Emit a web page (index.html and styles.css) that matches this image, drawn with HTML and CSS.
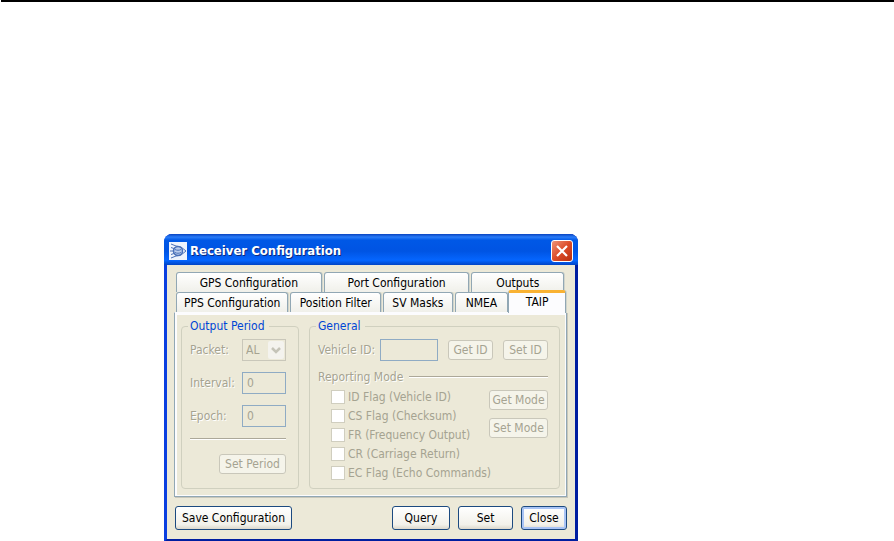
FILE: index.html
```html
<!doctype html>
<html lang="en">
<head>
  <meta charset="utf-8">
  <title>Receiver Configuration</title>
  <link rel="stylesheet" href="styles.css">
</head>
<body>
  <hr class="page-rule">
  <main class="page">
    <section class="window" aria-labelledby="title">
      <header class="titlebar">
        <svg class="app-icon" viewBox="0 0 18 18" aria-hidden="true">
          <rect width="18" height="18" fill="#eef3fd"/>
          <g fill="none" stroke="#4a70b8">
            <circle cx="9" cy="9" r="4.500" fill="#b9cbec" stroke-width="1.500"/>
            <path d="M6 7.500c2 1 4 1 6 0M6 10.500c2 1 4 1 6 0" stroke-width="1"/>
            <path d="M2 2l5 2 5 1 5 4-5 4-5 1-5 2M2 5.500l3 1M2 12.500l3-1M1 9h3" stroke-width="1"/>
          </g>
        </svg>
        <h1 id="title">Receiver Configuration</h1>
        <button class="close" type="button" aria-label="Close window">
          <svg viewBox="0 0 12 12" aria-hidden="true"><path d="M1 1l10 10M11 1L1 11" stroke="#fff" stroke-width="2.200"/></svg>
        </button>
      </header>

      <div class="client">
        <div role="tablist">
          <div class="tabs tabs-back">
            <button type="button" role="tab">GPS Configuration</button>
            <button type="button" role="tab">Port Configuration</button>
            <button type="button" role="tab">Outputs</button>
          </div>
          <div class="tabs tabs-front">
            <button type="button" role="tab">PPS Configuration</button>
            <button type="button" role="tab">Position Filter</button>
            <button type="button" role="tab">SV Masks</button>
            <button type="button" role="tab">NMEA</button>
            <button type="button" role="tab" class="active" aria-selected="true">TAIP</button>
          </div>
        </div>

        <div class="panel" role="tabpanel">
          <fieldset class="period" disabled>
            <legend>Output Period</legend>
            <div class="fields">
              <label for="packet">Packet:</label>
              <span class="select">
                <select id="packet"><option>AL</option></select>
                <svg viewBox="0 0 16 18" aria-hidden="true"><rect width="16" height="18" rx="2" fill="#f4f3ee"/><path d="M4 7l4 4 4-4" fill="none" stroke="#c5c4b8" stroke-width="2.500"/></svg>
              </span>
              <label for="interval">Interval:</label>
              <input id="interval" type="text" value="0">
              <label for="epoch">Epoch:</label>
              <input id="epoch" type="text" value="0">
            </div>
            <hr class="line">
            <button type="button" class="set-period">Set Period</button>
          </fieldset>

          <fieldset class="general" disabled>
            <legend>General</legend>
            <div class="vehicle">
              <label for="vehicle">Vehicle ID:</label>
              <input id="vehicle" type="text">
              <button type="button">Get ID</button>
              <button type="button">Set ID</button>
            </div>
            <div class="heading"><span>Reporting Mode</span><hr></div>
            <div class="mode">
              <div class="flags">
                <label><input type="checkbox">ID Flag (Vehicle ID)</label>
                <label><input type="checkbox">CS Flag (Checksum)</label>
                <label><input type="checkbox">FR (Frequency Output)</label>
                <label><input type="checkbox">CR (Carriage Return)</label>
                <label><input type="checkbox">EC Flag (Echo Commands)</label>
              </div>
              <div class="mode-buttons">
                <button type="button">Get Mode</button>
                <button type="button">Set Mode</button>
              </div>
            </div>
          </fieldset>
        </div>

        <footer class="actions">
          <button type="button" class="save">Save Configuration</button>
          <button type="button" class="query">Query</button>
          <button type="button" class="set">Set</button>
          <button type="button" class="default">Close</button>
        </footer>
      </div>
    </section>
  </main>
</body>
</html>
```

FILE: styles.css
```css
* {
  box-sizing: border-box;
}

body {
  margin: 0;
  background: #fff;
  color: #000;
  font: 12px/14px "DejaVu Sans Condensed", "DejaVu Sans", sans-serif;
}

button,
input,
select {
  margin: 0;
  padding: 0;
  font: inherit;
  color: inherit;
  white-space: nowrap;
}

hr {
  height: 2px;
  margin: 0;
  border: 0;
  border-top: 1px solid #aca899;
  background: #fff;
}

.page-rule {
  margin-left: 1px;
  border-top-color: #000;
  background: #000;
}

.page {
  display: flex;
  padding: 232px 0 0 164px;
}

.window {
  flex: 0 1 414px;
  border: solid #0a3fe0;
  border-width: 0 3px 3px;
  border-right-color: #001ea0;
  border-bottom-color: #001ea0;
  border-radius: 8px 8px 0 0;
  background: #0a3fe0;
}

.titlebar {
  display: flex;
  align-items: center;
  height: 31px;
  margin: 0 -3px;
  padding: 2px 5px 0;
  border-radius: 8px 8px 0 0;
  background: linear-gradient(#0843c0, #2a7cf8 10%, #0058e6 20%, #0054e3 55%, #0566ff 85%, #0245c4);
}

.app-icon {
  width: 18px;
  height: 18px;
}

h1 {
  flex: 1;
  margin: 0 0 0 3px;
  color: #fff;
  font-size: 13px;
  line-height: 18px;
  text-shadow: 1px 1px #0a2a80;
}

.close {
  display: grid;
  place-items: center;
  width: 22px;
  height: 22px;
  border: 1px solid #fff;
  border-radius: 3px;
  background: linear-gradient(135deg, #ee9478, #dc4c28 50%, #b83010);
}

.close svg {
  width: 12px;
}

.client {
  padding: 7px 8px 9px 7px;
  background: #ece9d8;
}

.tabs {
  display: flex;
  align-items: flex-end;
  gap: 2px;
  height: 20px;
  padding: 0 1px 0 2px;
}

.tabs button {
  height: 20px;
  border: 1px solid #91a7b4;
  border-bottom: 0;
  border-radius: 3px 3px 0 0;
  background: linear-gradient(#fff, #f0f0ea);
  box-shadow: 1px 0 #d0d4cc;
}

.tabs-back {
  padding-right: 3px;
}

.tabs-back button {
  flex: 146 1 0;
}

.tabs-back button:last-child {
  flex-grow: 92;
}

.tabs-front button {
  flex: 113 1 0;
}

.tabs-front button:nth-child(2) {
  flex-grow: 91;
}

.tabs-front button:nth-child(3) {
  flex-grow: 69;
}

.tabs-front button:nth-child(4) {
  flex-grow: 53;
}

.tabs-front .active {
  flex-grow: 57;
  height: 23px;
  margin: 0 0 -1px -2px;
  padding-bottom: 2px;
  border-top: 3px solid #f9b233;
  background: #fcfcfe;
  z-index: 1;
}

.panel {
  display: grid;
  grid-template-columns: 118fr 251fr;
  gap: 10px;
  padding: 6px 6px 7px;
  border: 1px solid #91a7b4;
  border-top-color: #fcfcfe;
  box-shadow: inset 2px 2px #fcfcfe, inset -1px -1px #fcfcfe, 1px 1px #c9c7ba;
}

fieldset {
  min-width: 0;
  margin: 0;
  border: 1px solid #d0d0bf;
  border-radius: 4px;
  color: #a5a391;
}

legend {
  margin-left: -2px;
  padding: 0 4px 0 2px;
  color: #0046d5;
}

.period {
  padding: 6px 12px 12px 8px;
}

.general {
  padding: 6px 11px 6px 8px;
}

label,
.heading {
  text-shadow: 1px 1px #fff;
  white-space: nowrap;
}

.fields {
  display: grid;
  grid-template-columns: 1fr 44px;
  row-gap: 11px;
  align-items: center;
}

input[type="text"] {
  width: 100%;
  height: 22px;
  padding: 0 4px;
  border: 1px solid #8fabc4;
  background: #ece9d8;
}

.select {
  display: flex;
  position: relative;
}

select {
  appearance: none;
  width: 100%;
  height: 22px;
  padding: 0 3px;
  border: 1px solid #c9c7ba;
  border-radius: 0;
  background: #ece9d8;
  opacity: 1;
}

.select svg {
  position: absolute;
  top: 2px;
  right: 2px;
  width: 16px;
  height: 18px;
  pointer-events: none;
}

.line {
  margin: 11px 0 14px;
}

fieldset button {
  height: 20px;
  border: 1px solid #c9c7ba;
  border-radius: 3px;
  background: #f5f4ea;
}

.set-period {
  display: block;
  width: 67px;
  margin-left: auto;
}

.vehicle {
  display: grid;
  grid-template-columns: 1fr 58px 45px 45px;
  align-items: center;
  column-gap: 10px;
}

.vehicle label {
  margin-right: -10px;
}

.heading {
  display: flex;
  align-items: center;
  gap: 6px;
  margin-top: 9px;
}

.heading hr {
  flex: 1;
}

.mode {
  display: flex;
  justify-content: space-between;
  margin-top: 3px;
}

.flags {
  min-width: 0;
  padding-left: 13px;
}

.flags label {
  display: flex;
  align-items: center;
  gap: 3px;
  height: 19px;
  text-shadow: none;
}

.flags input {
  appearance: none;
  flex: none;
  width: 14px;
  height: 14px;
  border: 1px solid #d0cebf;
  background: #fff;
}

.mode-buttons {
  display: flex;
  flex: none;
  flex-direction: column;
  gap: 8px;
  width: 59px;
  padding-top: 3px;
}

.actions {
  display: flex;
  gap: 8px;
  margin-top: 9px;
  padding-left: 1px;
}

.actions button {
  height: 24px;
  border: 1px solid #1c4a80;
  border-radius: 3px;
  background: linear-gradient(#fff, #f2f1ea 80%, #dcd8cc);
}

.actions .save {
  width: 117px;
  margin-right: auto;
}

.actions .query {
  width: 58px;
}

.actions .set {
  width: 55px;
}

.actions .default {
  width: 46px;
  box-shadow: inset 0 0 0 2px #a9c4f5;
}
```
